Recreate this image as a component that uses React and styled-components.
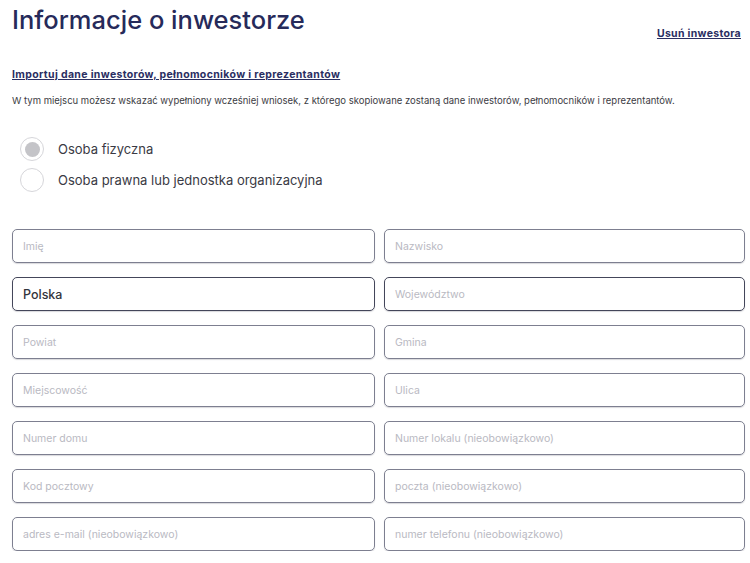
import styled, { createGlobalStyle } from "styled-components";

const GlobalStyle = createGlobalStyle`
  body {
    margin: 0;
    background: #fff;
    font-family: "Inter", "Noto Sans", sans-serif;
  }
`;

const Page = styled.div`
  padding: 0 5px 0 12px;
  color: #2a2d55;
`;

const Header = styled.div`
  display: flex;
  justify-content: space-between;
  align-items: flex-start;
`;

const Title = styled.h1`
  margin: 0;
  font-size: 25.5px;
  line-height: 40px;
  font-weight: 500;
  color: #262a5a;
`;

const Link = styled.a`
  display: block;
  font-weight: 700;
  color: #2a2e62;
  text-decoration: underline;
  cursor: pointer;
  font-size: ${(p) => p.$size || 10}px;
  letter-spacing: ${(p) => p.$spacing || 0}px;
  margin-top: ${(p) => p.$top || 0}px;
  margin-right: ${(p) => p.$right || 0}px;
  line-height: 12px;
`;

const Note = styled.p`
  margin: 14px 0 0;
  font-size: 9.5px;
  line-height: 12px;
  color: #3c3c44;
`;

const RadioGroup = styled.div`
  display: flex;
  flex-direction: column;
  gap: 7px;
  margin: 30px 0 0 8px;
`;

const RadioRow = styled.label`
  display: flex;
  align-items: center;
  gap: 14px;
  font-size: 13px;
  color: #3a3a44;
  cursor: pointer;
`;

const Dot = styled.span`
  width: 24px;
  height: 24px;
  border-radius: 50%;
  border: 1px solid #d6d6da;
  display: flex;
  align-items: center;
  justify-content: center;
  box-sizing: border-box;

  &::after {
    content: "";
    width: 15px;
    height: 15px;
    border-radius: 50%;
    background: ${(p) => (p.$checked ? "#c4c4c8" : "transparent")};
  }
`;

const Grid = styled.div`
  display: grid;
  grid-template-columns: 363px 361px;
  column-gap: 9px;
  row-gap: 14px;
  margin-top: 37px;
`;

const Field = styled.div`
  height: 34px;
  box-sizing: border-box;
  border: 1.5px solid ${(p) => (p.$dark ? "#44465a" : "#7d7f90")};
  border-radius: 5px;
  box-shadow: 0 1px 1px rgba(40, 40, 60, 0.18);
  display: flex;
  align-items: center;
  padding: 0 10px;
  font-size: ${(p) => (p.$value ? "12.5px" : "10.5px")};
  color: ${(p) => (p.$value ? "#33343c" : "#b9b9c2")};
  font-weight: ${(p) => (p.$value ? 500 : 400)};
`;

const fields = [
  ["Imię"],
  ["Nazwisko"],
  ["Polska", true, true],
  ["Województwo", false, true],
  ["Powiat"],
  ["Gmina"],
  ["Miejscowość"],
  ["Ulica"],
  ["Numer domu"],
  ["Numer lokalu (nieobowiązkowo)"],
  ["Kod pocztowy"],
  ["poczta (nieobowiązkowo)"],
  ["adres e-mail (nieobowiązkowo)"],
  ["numer telefonu (nieobowiązkowo)"],
];

export default function App() {
  return (
    <>
      <GlobalStyle />
      <Page>
        <Header>
          <Title>Informacje o inwestorze</Title>
          <Link $size={10.5} $spacing={0.3} $top={28} $right={4}>
            Usuń inwestora
          </Link>
        </Header>
        <Link $size={10.5} $spacing={0.35} $top={29}>
          Importuj dane inwestorów, pełnomocników i reprezentantów
        </Link>
        <Note>
          W tym miejscu możesz wskazać wypełniony wcześniej wniosek, z którego
          skopiowane zostaną dane inwestorów, pełnomocników i reprezentantów.
        </Note>
        <RadioGroup>
          <RadioRow>
            <Dot $checked />
            Osoba fizyczna
          </RadioRow>
          <RadioRow>
            <Dot />
            Osoba prawna lub jednostka organizacyjna
          </RadioRow>
        </RadioGroup>
        <Grid>
          {fields.map(([label, value, dark]) => (
            <Field key={label} $value={value} $dark={dark}>
              {label}
            </Field>
          ))}
        </Grid>
      </Page>
    </>
  );
}
